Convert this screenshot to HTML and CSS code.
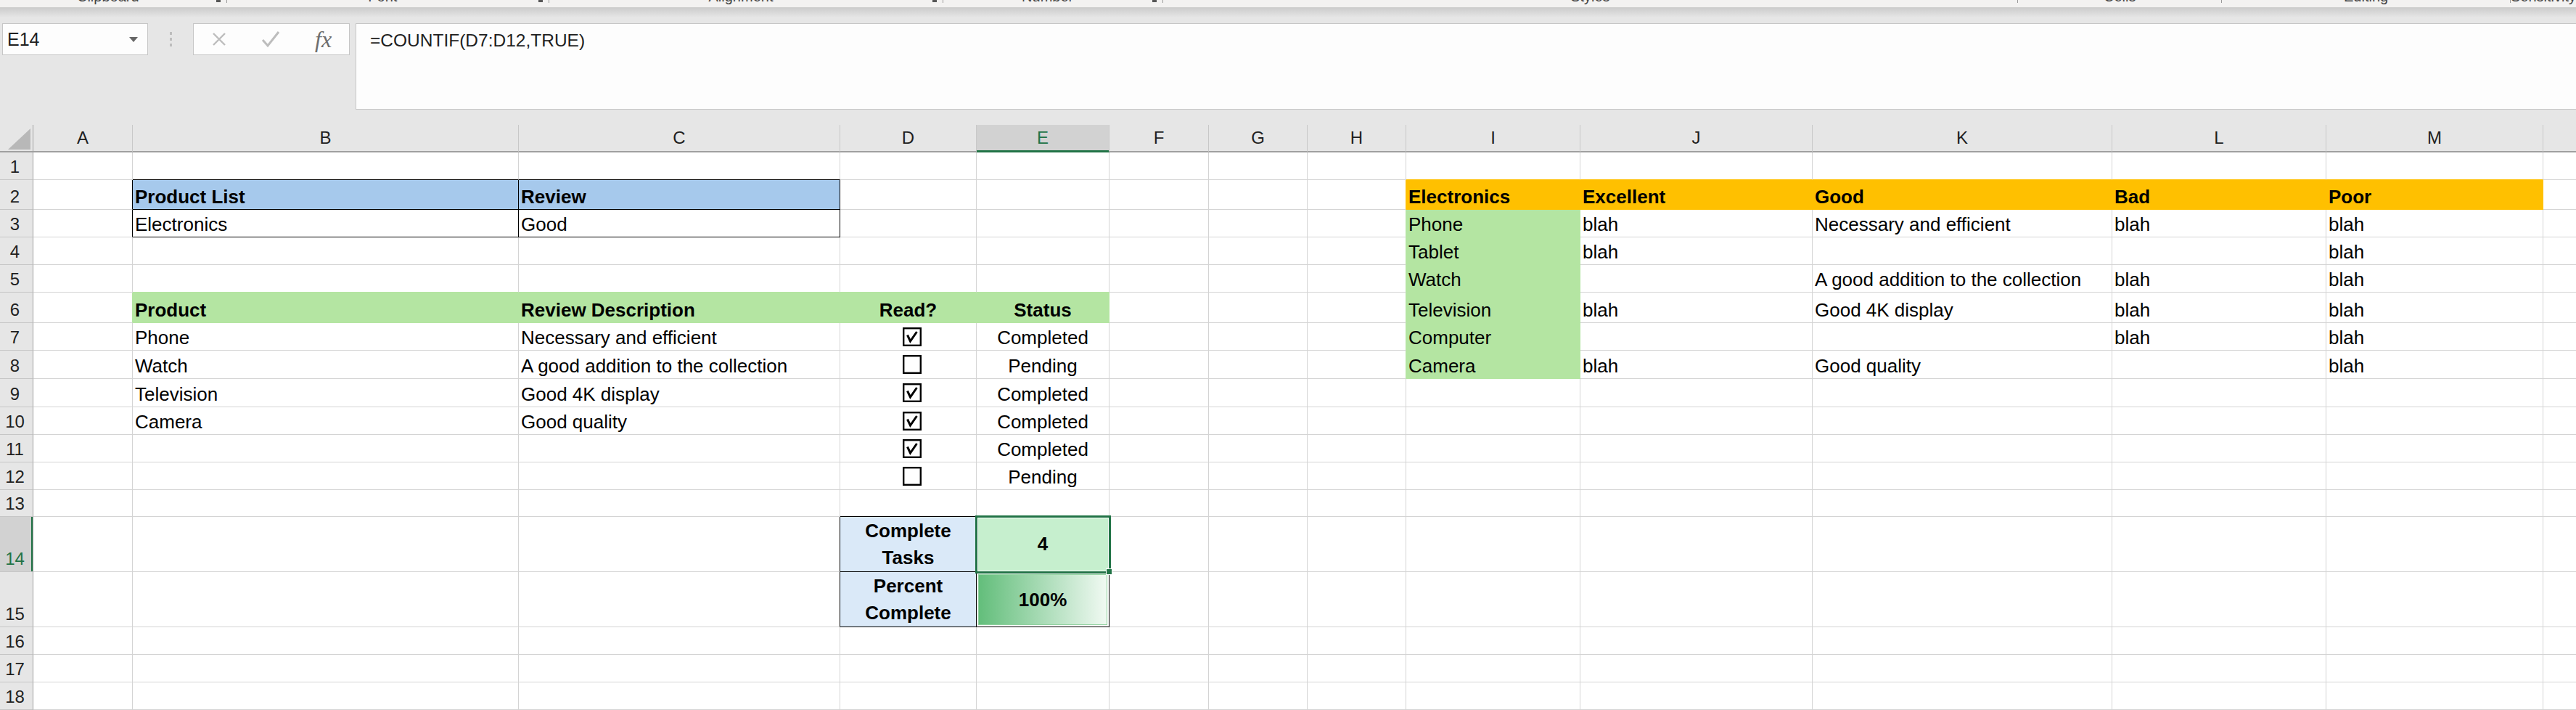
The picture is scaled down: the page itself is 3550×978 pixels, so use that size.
FILE: index.html
```html
<!DOCTYPE html>
<html lang="en">
<head>
  <meta charset="UTF-8" />
  <title>Product Review Tracker</title>
  <link rel="stylesheet" href="styles.css">
</head>
<body>
  <div class="ribbon">
    <div class="grp w1"><span class="lbl">Clipboard</span><span class="launch"></span><span class="sep"></span></div>
    <div class="grp w2"><span class="lbl">Font</span><span class="launch"></span><span class="sep"></span></div>
    <div class="grp w3"><span class="lbl">Alignment</span><span class="launch"></span><span class="sep"></span></div>
    <div class="grp w4"><span class="lbl">Number</span><span class="launch"></span><span class="sep"></span></div>
    <div class="grp w5"><span class="lbl">Styles</span><span class="sep"></span></div>
    <div class="grp w6"><span class="lbl">Cells</span><span class="sep"></span></div>
    <div class="grp w7"><span class="lbl">Editing</span><span class="sep"></span></div>
    <div class="grp w8"><span class="lbl">Sensitivity</span></div>
  </div>

  <div class="fbar">
    <div class="namebox"><span>E14</span><span class="caret"></span></div>
    <div class="grip"><i></i><i></i><i></i></div>
    <div class="fbtns">
      <svg width="22" height="22" viewBox="0 0 22 22"><path d="M3 3L19 19M19 3L3 19" stroke="#bdbdbd" stroke-width="2.4" fill="none"/></svg>
      <svg width="26" height="24" viewBox="0 0 26 24"><path d="M2 13L9 21L24 2" stroke="#bdbdbd" stroke-width="3" fill="none"/></svg>
      <span class="fx">fx</span>
    </div>
    <div class="formula">=COUNTIF(D7:D12,TRUE)</div>
  </div>
  <div class="gap"></div>

  <table class="sheet">
    <colgroup>
      <col style="width:46px"><col style="width:137px"><col style="width:532px"><col style="width:443px">
      <col style="width:188px"><col style="width:183px"><col style="width:137px"><col style="width:136px">
      <col style="width:136px"><col style="width:240px"><col style="width:320px"><col style="width:413px">
      <col style="width:295px"><col style="width:299px"><col style="width:136px">
    </colgroup>
    <thead>
      <tr>
        <th class="corner"><svg width="31" height="29" viewBox="0 0 31 29"><polygon points="31,0 31,29 0,29" fill="#b8b8b8"/></svg></th>
        <th>A</th><th>B</th><th>C</th><th>D</th><th class="on">E</th><th>F</th><th>G</th>
        <th>H</th><th>I</th><th>J</th><th>K</th><th>L</th><th>M</th><th></th>
      </tr>
    </thead>
    <tbody>
      <tr class="h38">
        <th>1</th><td></td><td class="kb"></td><td class="kb"></td><td></td><td></td><td></td><td></td>
        <td></td><td class="ob"></td><td class="ob"></td><td class="ob"></td><td class="ob"></td><td class="ob"></td><td></td>
      </tr>
      <tr class="h41">
        <th>2</th><td class="kr"></td><td class="blu k b">Product List</td><td class="blu k b">Review</td><td></td><td></td><td></td><td></td>
        <td class="or"></td><td class="org b">Electronics</td><td class="org b">Excellent</td><td class="org b">Good</td><td class="org b">Bad</td><td class="org b">Poor</td><td></td>
      </tr>
      <tr class="h38">
        <th>3</th><td class="kr"></td><td class="k">Electronics</td><td class="k">Good</td><td></td><td></td><td></td><td></td>
        <td class="gr"></td><td class="grn">Phone</td><td>blah</td><td>Necessary and efficient</td><td>blah</td><td>blah</td><td></td>
      </tr>
      <tr class="h38">
        <th>4</th><td></td><td></td><td></td><td></td><td></td><td></td><td></td>
        <td class="gr"></td><td class="grn">Tablet</td><td>blah</td><td></td><td></td><td>blah</td><td></td>
      </tr>
      <tr class="h38">
        <th>5</th><td></td><td class="gb"></td><td class="gb"></td><td class="gb"></td><td class="gb"></td><td></td><td></td>
        <td class="gr"></td><td class="grn">Watch</td><td></td><td>A good addition to the collection</td><td>blah</td><td>blah</td><td></td>
      </tr>
      <tr class="h42">
        <th>6</th><td class="gr"></td><td class="grn b">Product</td><td class="grn b">Review Description</td><td class="grn b c">Read?</td><td class="grn b c">Status</td><td></td><td></td>
        <td class="gr"></td><td class="grn">Television</td><td>blah</td><td>Good 4K display</td><td>blah</td><td>blah</td><td></td>
      </tr>
      <tr class="h38">
        <th>7</th><td></td><td>Phone</td><td>Necessary and efficient</td>
        <td class="cbx"><svg width="26" height="26" viewBox="0 0 26 26"><rect x="1.2" y="1.2" width="23.6" height="23.6" fill="#fff" stroke="#000" stroke-width="2.4"/><path d="M6.5 10.5L10.5 19L19.5 6" fill="none" stroke="#000" stroke-width="3"/></svg></td>
        <td class="c">Completed</td><td></td><td></td>
        <td class="gr"></td><td class="grn">Computer</td><td></td><td></td><td>blah</td><td>blah</td><td></td>
      </tr>
      <tr class="h39">
        <th>8</th><td></td><td>Watch</td><td>A good addition to the collection</td>
        <td class="cbx"><svg width="26" height="26" viewBox="0 0 26 26"><rect x="1.2" y="1.2" width="23.6" height="23.6" fill="#fff" stroke="#000" stroke-width="2.4"/></svg></td>
        <td class="c">Pending</td><td></td><td></td>
        <td class="gr"></td><td class="grn">Camera</td><td>blah</td><td>Good quality</td><td></td><td>blah</td><td></td>
      </tr>
      <tr class="h39">
        <th>9</th><td></td><td>Television</td><td>Good 4K display</td>
        <td class="cbx"><svg width="26" height="26" viewBox="0 0 26 26"><rect x="1.2" y="1.2" width="23.6" height="23.6" fill="#fff" stroke="#000" stroke-width="2.4"/><path d="M6.5 10.5L10.5 19L19.5 6" fill="none" stroke="#000" stroke-width="3"/></svg></td>
        <td class="c">Completed</td><td></td><td></td>
        <td></td><td></td><td></td><td></td><td></td><td></td><td></td>
      </tr>
      <tr class="h38">
        <th>10</th><td></td><td>Camera</td><td>Good quality</td>
        <td class="cbx"><svg width="26" height="26" viewBox="0 0 26 26"><rect x="1.2" y="1.2" width="23.6" height="23.6" fill="#fff" stroke="#000" stroke-width="2.4"/><path d="M6.5 10.5L10.5 19L19.5 6" fill="none" stroke="#000" stroke-width="3"/></svg></td>
        <td class="c">Completed</td><td></td><td></td>
        <td></td><td></td><td></td><td></td><td></td><td></td><td></td>
      </tr>
      <tr class="h38">
        <th>11</th><td></td><td></td><td></td>
        <td class="cbx"><svg width="26" height="26" viewBox="0 0 26 26"><rect x="1.2" y="1.2" width="23.6" height="23.6" fill="#fff" stroke="#000" stroke-width="2.4"/><path d="M6.5 10.5L10.5 19L19.5 6" fill="none" stroke="#000" stroke-width="3"/></svg></td>
        <td class="c">Completed</td><td></td><td></td>
        <td></td><td></td><td></td><td></td><td></td><td></td><td></td>
      </tr>
      <tr class="h38">
        <th>12</th><td></td><td></td><td></td>
        <td class="cbx"><svg width="26" height="26" viewBox="0 0 26 26"><rect x="1.2" y="1.2" width="23.6" height="23.6" fill="#fff" stroke="#000" stroke-width="2.4"/></svg></td>
        <td class="c">Pending</td><td></td><td></td>
        <td></td><td></td><td></td><td></td><td></td><td></td><td></td>
      </tr>
      <tr class="h37">
        <th>13</th><td></td><td></td><td></td><td class="kb"></td><td class="kb"></td><td></td><td></td>
        <td></td><td></td><td></td><td></td><td></td><td></td><td></td>
      </tr>
      <tr class="h76">
        <th class="on">14</th><td></td><td></td><td class="kr"></td>
        <td class="lb k b c mid">Complete<br>Tasks</td>
        <td class="mint k b c mid selcell">4<div class="selbox"></div><div class="handle"></div></td>
        <td></td><td></td><td></td><td></td><td></td><td></td><td></td><td></td><td></td>
      </tr>
      <tr class="h76">
        <th>15</th><td></td><td></td><td class="kr"></td>
        <td class="lb k b c mid">Percent<br>Complete</td>
        <td class="k b c barcell"><div class="dbar" style="width:178px">100%</div></td>
        <td></td><td></td><td></td><td></td><td></td><td></td><td></td><td></td><td></td>
      </tr>
      <tr class="h38">
        <th>16</th><td></td><td></td><td></td><td></td><td></td><td></td><td></td>
        <td></td><td></td><td></td><td></td><td></td><td></td><td></td>
      </tr>
      <tr class="h38">
        <th>17</th><td></td><td></td><td></td><td></td><td></td><td></td><td></td>
        <td></td><td></td><td></td><td></td><td></td><td></td><td></td>
      </tr>
      <tr class="h38">
        <th>18</th><td></td><td></td><td></td><td></td><td></td><td></td><td></td>
        <td></td><td></td><td></td><td></td><td></td><td></td><td></td>
      </tr>
    </tbody>
  </table>
</body>
</html>
```

FILE: styles.css
```css
body { margin: 0; width: 3550px; height: 978px; overflow: hidden; background: #e6e6e6; font-family: "Liberation Sans", Arial, sans-serif; color: #000; }

/* ribbon bottom edge, only the group labels peek out */
.ribbon { display: flex; height: 10px; overflow: hidden; background: #f3f2f1; font-size: 20px; color: #444; }
.grp { display: flex; align-items: flex-start; }
.grp .lbl { flex: 1; text-align: center; line-height: 20px; margin-top: -15px; white-space: nowrap; }
.grp .launch { width: 6px; height: 3px; background: #555; margin-right: 8px; }
.grp .sep { width: 1px; height: 4px; background: #9a9a9a; }
.w1 { width: 315px; } .w2 { width: 448px; } .w3 { width: 547px; } .w4 { width: 305px; }
.w5 { width: 1188px; } .w6 { width: 283px; } .w7 { width: 401px; } .w8 { flex: 1; }

/* formula bar */
.fbar { display: flex; align-items: flex-start; height: 141px; padding-top: 22px; box-sizing: border-box; background: linear-gradient(#cbcbcb, #e6e6e6 14px); }
.namebox { margin-left: 3px; width: 201px; height: 44px; box-sizing: border-box; border: 1px solid #c6c6c6; background: #fdfdfd; display: flex; align-items: center; justify-content: space-between; padding: 0 13px 0 6px; font-size: 25px; color: #1f1f1f; }
.caret { width: 0; height: 0; border-left: 6px solid transparent; border-right: 6px solid transparent; border-top: 7px solid #666; }
.grip { width: 62px; height: 44px; display: flex; flex-direction: column; align-items: center; justify-content: center; gap: 4px; }
.grip i { width: 3px; height: 4px; background: #bdbdbd; }
.fbtns { width: 216px; height: 44px; box-sizing: border-box; border: 1px solid #c6c6c6; background: #fdfdfd; display: flex; align-items: center; justify-content: space-around; }
.fx { font-family: "Liberation Serif", serif; font-style: italic; font-size: 32px; color: #6e6e6e; line-height: 1; }
.formula { flex: 1; margin-left: 8px; height: 119px; box-sizing: border-box; border: 1px solid #c6c6c6; border-right: 0; background: #fdfdfd; padding: 9px 0 0 19px; font-size: 24.5px; color: #1f1f1f; }
.gap { height: 21px; }

/* grid */
.sheet { border-collapse: separate; border-spacing: 0; table-layout: fixed; width: 3641px; }
.sheet thead th { height: 38px; box-sizing: border-box; padding: 0; background: #e6e6e6; border-right: 1px solid #c8c8c8; border-bottom: 2px solid #a0a0a0; font-size: 24px; font-weight: normal; color: #1f1f1f; }
.sheet thead th.corner { text-align: right; vertical-align: bottom; padding: 0 3px 2px 0; line-height: 0; border-right-color: #a0a0a0; }
.sheet thead th.on { background: #d2d2d2; color: #217346; border-bottom-color: #217346; box-shadow: inset 0 -1px #217346; }
.sheet tbody th { padding: 0 4px 3px 0; background: #e6e6e6; border-right: 1px solid #a0a0a0; border-bottom: 1px solid #c6c6c6; font-size: 24px; font-weight: normal; line-height: 28px; vertical-align: bottom; text-align: center; color: #1f1f1f; }
.sheet tbody th.on { background: #d2d2d2; color: #217346; box-shadow: inset -2px 0 #217346; }
.sheet td { padding: 0 3px 3px; background: #fff; border-right: 1px solid #d4d4d4; border-bottom: 1px solid #d4d4d4; font-size: 26px; line-height: 28px; vertical-align: bottom; white-space: nowrap; overflow: visible; }

.h37 { height: 37px; } .h38 { height: 38px; } .h39 { height: 39px; }
.h41 { height: 41px; } .h42 { height: 42px; } .h76 { height: 76px; }

.b { font-weight: bold; }
.c { text-align: center; }
.mid { vertical-align: middle !important; line-height: 37px !important; padding: 0 !important; white-space: normal !important; }

/* fills */
.sheet td.blu { background: #a6c9ec; }
.sheet td.grn { background: #b4e5a2; border-color: #b4e5a2; }
.sheet td.org { background: #ffc000; border-color: #ffc000; }
.sheet td.lb { background: #dae9f8; }
.sheet td.mint { background: #c6efce; }
.sheet td.gr { border-right-color: #b4e5a2; }
.sheet td.gb { border-bottom-color: #b4e5a2; }
.sheet td.or { border-right-color: #ffc000; }
.sheet td.ob { border-bottom-color: #ffc000; }

/* black borders */
.sheet td.k { border-color: #000; }
.sheet td.kr { border-right-color: #000; }
.sheet td.kb { border-bottom-color: #000; }

.sheet td.cbx { padding: 0 0 0 10px; line-height: 0; text-align: center; vertical-align: middle; }

.selcell { position: relative; }
.selbox { position: absolute; left: -2px; top: -2px; right: -3px; bottom: -3px; border: 3px solid #217346; box-shadow: inset 0 0 0 1px #fff; z-index: 1; }
.handle { position: absolute; right: -5px; bottom: -5px; width: 9px; height: 9px; box-sizing: border-box; background: #217346; border: 1px solid #fff; z-index: 2; }

.sheet td.barcell { padding: 0; vertical-align: top; }
.dbar { margin: 3px 0 0 2px; height: 70px; box-sizing: border-box; border: 1px solid #8fd19e; background: linear-gradient(90deg, #63be7b, #f0f9f2); line-height: 68px; text-align: center; }
```
